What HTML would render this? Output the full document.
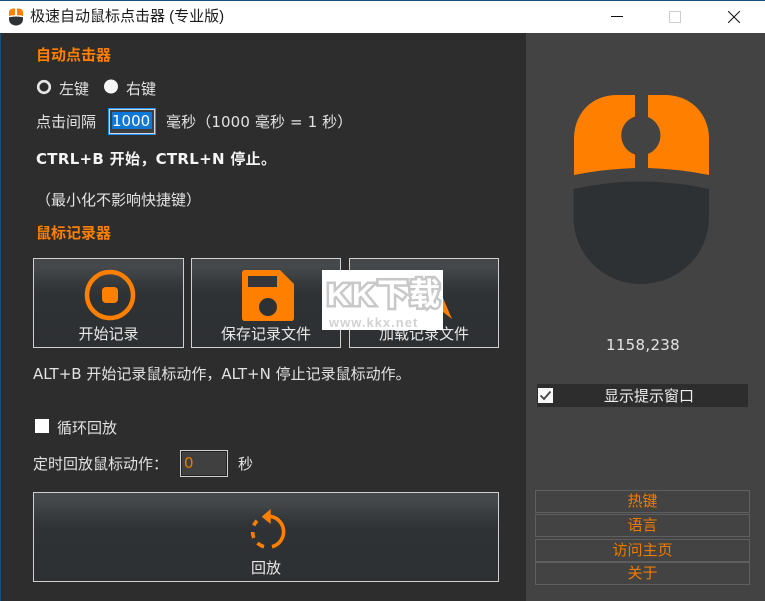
<!DOCTYPE html>
<html lang="zh">
<head>
<meta charset="utf-8">
<title>极速自动鼠标点击器 (专业版)</title>
<style>
html,body{margin:0;padding:0;background:#2d2d2d;}
#w{position:relative;width:765px;height:601px;overflow:hidden;background:#2d2d2d;font-family:"DejaVu Sans","WenQuanYi Zen Hei","Noto Sans CJK SC",sans-serif;font-size:15px;color:#e2e2e2;}
#w div{position:absolute;white-space:nowrap;}
.t{line-height:20px;}
.o{color:#ff8000;font-weight:bold;}
.btn{box-sizing:border-box;border:1px solid #d0d0d0;background:linear-gradient(#45484b 0,#45484b 10%,#3d4043 20%,#35383b 30%,#2f3235 42%,#2d3033 100%);}
.lbl{left:0;right:0;text-align:center;line-height:20px;color:#e8e8e8;}
.side{box-sizing:border-box;left:535px;width:215px;height:23px;border:1px solid #5f5f5f;color:#ee7b00;text-align:center;line-height:21px;font-size:15px;}
.wm{font-family:"Liberation Sans","Noto Sans CJK SC",sans-serif;font-weight:bold;font-size:31px;line-height:34px;color:#fff;-webkit-text-stroke:5px #c8c8c8;paint-order:stroke fill;}
</style>
</head>
<body>
<div id="w">
  <div style="left:0;top:0;width:765px;height:33px;background:#fff;border-top:1px solid #1a4f7c;box-sizing:border-box;"></div>
  <div style="left:0;top:33px;width:1px;height:568px;background:#1a4f7c;"></div>
  <div style="left:526px;top:33px;width:239px;height:568px;background:#434343;"></div>

  <svg style="position:absolute;left:8px;top:7px" width="16" height="19" viewBox="0 0 16 19">
    <path d="M1 8V5.500C1 3 3 1.500 5.500 1.500H7V8.300Q3.500 8.300 1 9Z M9 1.500H10.500C13 1.500 15 3 15 5.500V9Q12.500 8.300 9 8.300Z" fill="#ff8000"/>
    <rect x="7" y="3" width="2" height="5" fill="#fff"/>
    <path d="M1 10.200Q8 8.700 15 10.200V12C15 16 12 18.500 8 18.500S1 16 1 12Z" fill="#2f3234"/>
  </svg>
  <div class="t" style="left:30px;top:7px;font-size:15px;color:#1a1a1a;font-family:'Liberation Sans','WenQuanYi Zen Hei','Noto Sans CJK SC',sans-serif;">极速自动鼠标点击器 (专业版)</div>
  <div style="left:611px;top:16px;width:12px;height:1px;background:#111;"></div>
  <div style="left:669px;top:11px;width:10px;height:10px;border:1px solid #ccc;"></div>
  <svg style="position:absolute;left:728px;top:11px" width="12" height="12" viewBox="0 0 12 12"><path d="M0 0 12 12M12 0 0 12" stroke="#111" stroke-width="1" fill="none"/></svg>

  <div class="t o" style="left:36px;top:45px;">自动点击器</div>

  <svg style="position:absolute;left:36px;top:79px" width="16" height="16"><circle cx="8" cy="8" r="5.800" fill="#2d2d2d" stroke="#e6e6e6" stroke-width="2.600"/></svg>
  <div class="t" style="left:59px;top:79px;">左键</div>
  <svg style="position:absolute;left:104px;top:79px" width="16" height="16"><circle cx="7" cy="7.500" r="7" fill="#f7f7f7"/></svg>
  <div class="t" style="left:126px;top:79px;">右键</div>

  <div class="t" style="left:36px;top:112px;">点击间隔</div>
  <div style="left:108px;top:108px;width:48px;height:27px;box-sizing:border-box;border:1px solid #1e90ff;background:#3e3e3e;box-shadow:inset 0 0 0 1px #cfd8e0;"></div>
  <div class="t" style="left:112px;top:112px;width:40px;height:17px;line-height:18px;background:#0f78d6;color:#fff;font-size:15px;">1000</div>
  <div class="t" style="left:166px;top:112px;letter-spacing:.12px;">毫秒（1000 毫秒 = 1 秒）</div>

  <div class="t" style="left:36px;top:149px;font-weight:bold;color:#f5f5f5;letter-spacing:.3px;">CTRL+B 开始，CTRL+N 停止。</div>
  <div class="t" style="left:36px;top:190px;">（最小化不影响快捷键）</div>

  <div class="t o" style="left:36px;top:223px;">鼠标记录器</div>

  <div class="btn" style="left:33px;top:258px;width:151px;height:90px;">
    <svg style="position:absolute;left:50px;top:10px" width="52" height="52"><circle cx="26" cy="26" r="23" fill="none" stroke="#ff8000" stroke-width="4.500"/><rect x="18" y="18" width="16" height="16" rx="4" fill="#ff8000"/></svg>
    <div class="lbl" style="top:65px;">开始记录</div>
  </div>
  <div class="btn" style="left:191px;top:258px;width:150px;height:90px;">
    <svg style="position:absolute;left:50px;top:11px" width="54" height="52" viewBox="0 0 54 52"><path d="M3 0H38L52 14V48Q52 51 49 51H3Q0 51 0 48V3Q0 0 3 0Z" fill="#ff8000"/><rect x="6" y="6" width="29" height="11" fill="#33363a"/><circle cx="26" cy="37" r="9" fill="#2e3134"/></svg>
    <div class="lbl" style="top:65px;">保存记录文件</div>
  </div>
  <div class="btn" style="left:349px;top:258px;width:150px;height:90px;">
    <div class="lbl" style="top:65px;">加载记录文件</div>
  </div>
  <svg style="position:absolute;left:440px;top:295px" width="16" height="26"><path d="M3 3 12 24 3 17Z" fill="#ff8000"/></svg>

  <div style="left:322px;top:270px;width:121px;height:60px;background:#fff;overflow:hidden;">
    <div class="wm" style="left:5px;top:8px;">K</div>
    <div class="wm" style="left:30px;top:8px;">K</div>
    <div class="wm" style="left:55px;top:8px;">下</div>
    <div class="wm" style="left:87px;top:8px;">载</div>
    <div style="left:7px;top:46px;font-family:'Liberation Sans',sans-serif;font-size:13px;line-height:14px;font-weight:bold;color:#d2d2d2;letter-spacing:1px;">www.kkx.net</div>
  </div>

  <div class="t" style="left:33px;top:364px;">ALT+B 开始记录鼠标动作，ALT+N 停止记录鼠标动作。</div>

  <div style="left:35px;top:419px;width:14px;height:14px;background:#fff;"></div>
  <div class="t" style="left:57px;top:418px;">循环回放</div>

  <div class="t" style="left:33px;top:454px;">定时回放鼠标动作：</div>
  <div style="left:180px;top:450px;width:48px;height:27px;box-sizing:border-box;border:1px solid #cfcfcf;background:#404040;box-shadow:inset 0 0 0 1px #222;"></div>
  <div class="t" style="left:184px;top:453px;color:#e87800;font-size:15px;">0</div>
  <div class="t" style="left:238px;top:454px;">秒</div>

  <div class="btn" style="left:33px;top:492px;width:466px;height:90px;">
    <svg style="position:absolute;left:214px;top:14px" width="40" height="44" viewBox="0 0 40 44">
      <path d="M20 9.200A15.500 15.500 0 0 1 24 39.700" fill="none" stroke="#ff8000" stroke-width="3.600"/>
      <path d="M22.700 2V17L13.700 9.700Z" fill="#ff8000"/>
      <path d="M9 13.700A15.500 15.500 0 0 0 5.800 18.500" fill="none" stroke="#ff8000" stroke-width="3.600"/>
      <path d="M4.600 25A15.500 15.500 0 0 0 5.800 30.900" fill="none" stroke="#ff8000" stroke-width="3.600"/>
      <path d="M9.500 36.100A15.500 15.500 0 0 0 16 39.700" fill="none" stroke="#ff8000" stroke-width="3.600"/>
    </svg>
    <div class="lbl" style="top:65px;">回放</div>
  </div>

  <svg style="position:absolute;left:570px;top:90px" width="145" height="200" viewBox="570 90 145 200">
    <path d="M635 95H617C592 95 574 113 574 139V175Q604 169 635 168V154.500A20 20 0 0 1 635 116.500Z" fill="#ff8000"/>
    <path d="M648 95H665C690 95 709 113 709 139V175Q679 169 648 168V154A20 20 0 0 0 648 117Z" fill="#ff8000"/>
    <path d="M573.500 189Q641 174 709 189V217C709 255 678 284 641 284S573.500 255 573.500 217Z" fill="#2e3133"/>
  </svg>

  <div class="t" style="left:606px;top:335px;color:#e4e4e4;font-size:15px;letter-spacing:.3px;">1158,238</div>

  <div style="left:537px;top:384px;width:211px;height:23px;background:#2d2d2d;"></div>
  <svg style="position:absolute;left:538px;top:388px" width="15" height="15"><rect width="15" height="15" fill="#f8f8f8"/><path d="M2.500 7.500 6 11 12.500 3.500" fill="none" stroke="#444" stroke-width="1.800"/></svg>
  <div class="t" style="left:604px;top:386px;color:#ededed;">显示提示窗口</div>

  <div class="side" style="top:490px;">热键</div>
  <div class="side" style="top:514px;">语言</div>
  <div class="side" style="top:539px;">访问主页</div>
  <div class="side" style="top:562px;">关于</div>
</div>
</body>
</html>
